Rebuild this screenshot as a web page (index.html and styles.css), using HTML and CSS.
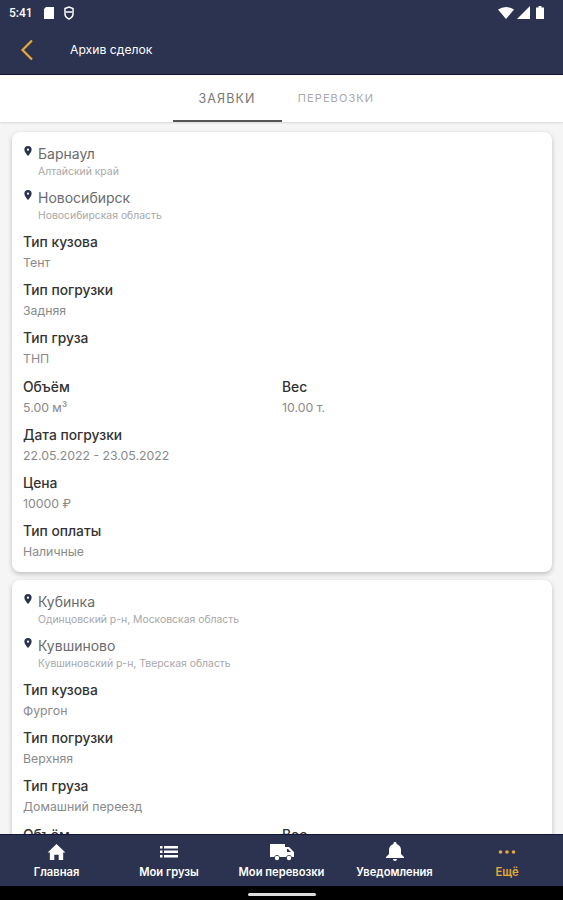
FILE: index.html
```html
<!DOCTYPE html>
<html lang="ru">
<head>
    <meta charset="UTF-8">
    <meta name="viewport" content="width=device-width, initial-scale=1.0">
    <title>Архив сделок</title>
    <link rel="stylesheet" href="styles.css">
</head>
<body>
<div class="app">

    <!-- Status bar -->
    <div class="status-bar">
        <span class="time">5:41</span>
        <svg class="st-icon" width="12" height="14" viewBox="0 0 12 14"><path d="M3 1h8v12H1V3z" fill="#fff"/></svg>
        <svg class="st-icon" width="10" height="14" viewBox="0 0 10 14"><path d="M1 2.500 5 1l4 1.500V8c0 2.500-2 4-4 5-2-1-4-2.500-4-5z" fill="none" stroke="#fff" stroke-width="1.500"/><path d="M2 6h6" stroke="#fff" stroke-width="1.500"/></svg>
        <span class="spacer"></span>
        <svg width="16" height="12" viewBox="0 0 16 12"><path d="M0 2.500Q8-2.500 16 2.500L8 12z" fill="#fff"/></svg>
        <svg width="13" height="13" viewBox="0 0 13 13"><path d="M13 0v13H0z" fill="#fff"/></svg>
        <svg class="battery" width="8" height="13" viewBox="0 0 8 13"><path d="M2.500 0h3v1.500H8V13H0V1.500h2.500z" fill="#fff"/></svg>
    </div>

    <!-- Header -->
    <header class="top-bar">
        <svg class="back" width="14" height="22" viewBox="0 0 14 22"><path d="M12 1.500 2.500 11l9.500 9.500" fill="none" stroke="#e9a83a" stroke-width="2.200"/></svg>
        <span class="top-title">Архив сделок</span>
    </header>

    <!-- Tabs -->
    <nav class="tabs">
        <div class="tab active">ЗАЯВКИ</div>
        <div class="tab">ПЕРЕВОЗКИ</div>
    </nav>

    <div class="list">
        <div class="card">
            <div class="place">
                <svg class="pin" width="8" height="10" viewBox="0 0 8 11"><path fill-rule="evenodd" d="M4 0a4 4 0 0 1 4 4c0 2.500-2.500 5-4 7-1.500-2-4-4.500-4-7a4 4 0 0 1 4-4zm0 2.800a1.200 1.200 0 1 0 0 2.400 1.200 1.200 0 0 0 0-2.400z" fill="#2c3350"/></svg>
                <div>
                    <div class="city">Барнаул</div>
                    <div class="region">Алтайский край</div>
                </div>
            </div>
            <div class="place">
                <svg class="pin" width="8" height="10" viewBox="0 0 8 11"><path fill-rule="evenodd" d="M4 0a4 4 0 0 1 4 4c0 2.500-2.500 5-4 7-1.500-2-4-4.500-4-7a4 4 0 0 1 4-4zm0 2.800a1.200 1.200 0 1 0 0 2.400 1.200 1.200 0 0 0 0-2.400z" fill="#2c3350"/></svg>
                <div>
                    <div class="city">Новосибирск</div>
                    <div class="region">Новосибирская область</div>
                </div>
            </div>
            <div class="field"><div class="label">Тип кузова</div><div class="value">Тент</div></div>
            <div class="field"><div class="label">Тип погрузки</div><div class="value">Задняя</div></div>
            <div class="field"><div class="label">Тип груза</div><div class="value">ТНП</div></div>
            <div class="two-col">
                <div class="field"><div class="label">Объём</div><div class="value">5.00 м³</div></div>
                <div class="field"><div class="label">Вес</div><div class="value">10.00 т.</div></div>
            </div>
            <div class="field"><div class="label">Дата погрузки</div><div class="value">22.05.2022 - 23.05.2022</div></div>
            <div class="field"><div class="label">Цена</div><div class="value">10000 ₽</div></div>
            <div class="field"><div class="label">Тип оплаты</div><div class="value">Наличные</div></div>
        </div>

        <div class="card">
            <div class="place">
                <svg class="pin" width="8" height="10" viewBox="0 0 8 11"><path fill-rule="evenodd" d="M4 0a4 4 0 0 1 4 4c0 2.500-2.500 5-4 7-1.500-2-4-4.500-4-7a4 4 0 0 1 4-4zm0 2.800a1.200 1.200 0 1 0 0 2.400 1.200 1.200 0 0 0 0-2.400z" fill="#2c3350"/></svg>
                <div>
                    <div class="city">Кубинка</div>
                    <div class="region">Одинцовский р-н, Московская область</div>
                </div>
            </div>
            <div class="place">
                <svg class="pin" width="8" height="10" viewBox="0 0 8 11"><path fill-rule="evenodd" d="M4 0a4 4 0 0 1 4 4c0 2.500-2.500 5-4 7-1.500-2-4-4.500-4-7a4 4 0 0 1 4-4zm0 2.800a1.200 1.200 0 1 0 0 2.400 1.200 1.200 0 0 0 0-2.400z" fill="#2c3350"/></svg>
                <div>
                    <div class="city">Кувшиново</div>
                    <div class="region">Кувшиновский р-н, Тверская область</div>
                </div>
            </div>
            <div class="field"><div class="label">Тип кузова</div><div class="value">Фургон</div></div>
            <div class="field"><div class="label">Тип погрузки</div><div class="value">Верхняя</div></div>
            <div class="field"><div class="label">Тип груза</div><div class="value">Домашний переезд</div></div>
            <div class="two-col">
                <div class="field"><div class="label">Объём</div><div class="value">5.00 м³</div></div>
                <div class="field"><div class="label">Вес</div><div class="value">10.00 т.</div></div>
            </div>
        </div>
    </div>

    <!-- Bottom navigation -->
    <footer class="bottom-nav">
        <div class="nav-item">
            <div class="nav-icon"><svg width="19" height="16" viewBox="0 0 20 18"><path d="M10 0 20 9.500h-2.500V18h-5v-6h-5v6h-5V9.500H0z" fill="#fff"/></svg></div>
            <span>Главная</span>
        </div>
        <div class="nav-item">
            <div class="nav-icon"><svg width="20" height="18" viewBox="0 0 20 18"><path d="M1 3h2.500v2.500H1zM5 3h14v2.500H5zM1 7.500h2.500V10H1zM5 7.500h14V10H5zM1 12h2.500v2.500H1zM5 12h14v2.500H5z" fill="#fff"/></svg></div>
            <span>Мои грузы</span>
        </div>
        <div class="nav-item">
            <div class="nav-icon"><svg width="24" height="18" viewBox="0 0 24 18"><path fill-rule="evenodd" d="M0 1h15v3h4l5 5v5h-2.200a3 3 0 0 0-5.600 0H9.800a3 3 0 0 0-5.600 0H0zM17 6v3h4l-3-3z" fill="#fff"/><circle cx="7" cy="15" r="2.200" fill="#fff"/><circle cx="19" cy="15" r="2.200" fill="#fff"/></svg></div>
            <span>Мои перевозки</span>
        </div>
        <div class="nav-item">
            <div class="nav-icon"><svg width="18" height="20" viewBox="0 0 18 20"><path d="M9 0a1.500 1.500 0 0 1 1.500 2C13.500 2.800 15 5.300 15 8v4l3 3v1H0v-1l3-3V8c0-2.700 1.500-5.200 4.500-6A1.500 1.500 0 0 1 9 0zM7 17h4a2 2 0 0 1-4 0z" fill="#fff"/></svg></div>
            <span>Уведомления</span>
        </div>
        <div class="nav-item more">
            <div class="nav-icon"><svg width="18" height="18" viewBox="0 0 18 18"><circle cx="2.500" cy="9" r="1.800" fill="#e9a83a"/><circle cx="9" cy="9" r="1.800" fill="#e9a83a"/><circle cx="15.500" cy="9" r="1.800" fill="#e9a83a"/></svg></div>
            <span>Ещё</span>
        </div>
    </footer>

    <div class="gesture-bar"><div class="gesture-pill"></div></div>
</div>
</body>
</html>
```

FILE: styles.css
```css
* {
    box-sizing: border-box;
}

body {
    margin: 0;
    font-family: Inter, "Noto Sans", sans-serif;
    background-color: #f5f5f5;
}

.app {
    display: flex;
    flex-direction: column;
    height: 900px;
    overflow: hidden;
}

/* Status bar */
.status-bar {
    display: flex;
    align-items: center;
    gap: 3px;
    height: 25px;
    padding: 0 19px 0 9px;
    background-color: #2c3350;
    color: #fff;
    flex-shrink: 0;
}

.time {
    font-family: Roboto, sans-serif;
    font-size: 12px;
    font-weight: 500;
    margin-right: 7px;
}

.st-icon {
    margin-right: 6px;
}

.spacer {
    flex: 1;
}

.battery {
    margin-left: 3px;
}

/* Header */
.top-bar {
    display: flex;
    align-items: center;
    height: 50px;
    padding-left: 20px;
    background-color: #2c3350;
    border-bottom: 1px solid #12173a;
    flex-shrink: 0;
}

.top-title {
    margin-left: 36px;
    font-size: 12.200px;
    color: #fff;
}

/* Tabs */
.tabs {
    display: flex;
    justify-content: center;
    height: 47px;
    background-color: #fff;
    box-shadow: 0 1px 2px rgba(0, 0, 0, 0.12);
    flex-shrink: 0;
    position: relative;
}

.tab {
    width: 109px;
    padding-top: 16px;
    text-align: center;
    font-size: 11px;
    letter-spacing: 1.100px;
    color: #a9a9a9;
}

.tab.active {
    color: #777;
    font-size: 12.500px;
    border-bottom: 2px solid #555;
}

/* Cards */
.list {
    flex: 1;
    min-height: 0;
    overflow: hidden;
    padding: 10px 11px 0 12px;
}

.card {
    height: 440px;
    margin-bottom: 8px;
    padding: 13px 11px 0 11px;
    background-color: #fff;
    border-radius: 8px;
    box-shadow: 0 2px 5px rgba(0, 0, 0, 0.22);
}

.place {
    display: flex;
    gap: 7px;
    height: 44px;
}

.pin {
    margin-top: 1px;
    margin-left: 1px;
    margin-right: -1px;
    flex-shrink: 0;
}

.place + .field {
    margin-top: -1px;
}

.city {
    font-size: 14px;
    line-height: 18px;
    color: #6b6b6b;
}

.region {
    margin-top: 2px;
    font-size: 10.400px;
    line-height: 14px;
    color: #a8a8a8;
}

.field {
    height: 48.200px;
}

.label {
    font-size: 13.800px;
    line-height: 20px;
    font-weight: 500;
    color: #333;
}

.value {
    margin-top: 2px;
    font-size: 12.300px;
    line-height: 18px;
    color: #8a8a8a;
}

.two-col {
    display: grid;
    grid-template-columns: 259px 1fr;
}

/* Bottom navigation */
.bottom-nav {
    display: grid;
    grid-template-columns: 113px 112px 113px 113px 112px;
    height: 52px;
    background-color: #2c3350;
    border-top: 1px solid #12173a;
    flex-shrink: 0;
}

.nav-item {
    display: flex;
    flex-direction: column;
    align-items: center;
    padding-top: 7px;
    color: #fff;
    font-size: 11.200px;
    font-weight: 600;
}

.nav-icon {
    display: flex;
    align-items: center;
    justify-content: center;
    height: 20px;
}

.nav-item span {
    margin-top: 3px;
    white-space: nowrap;
}

.nav-item.more {
    color: #e9a83a;
}

.gesture-bar {
    display: flex;
    justify-content: center;
    padding-top: 7px;
    height: 14px;
    background-color: #000;
    flex-shrink: 0;
}

.gesture-pill {
    width: 68px;
    height: 3px;
    border-radius: 2px;
    background-color: #ddd;
}
```
